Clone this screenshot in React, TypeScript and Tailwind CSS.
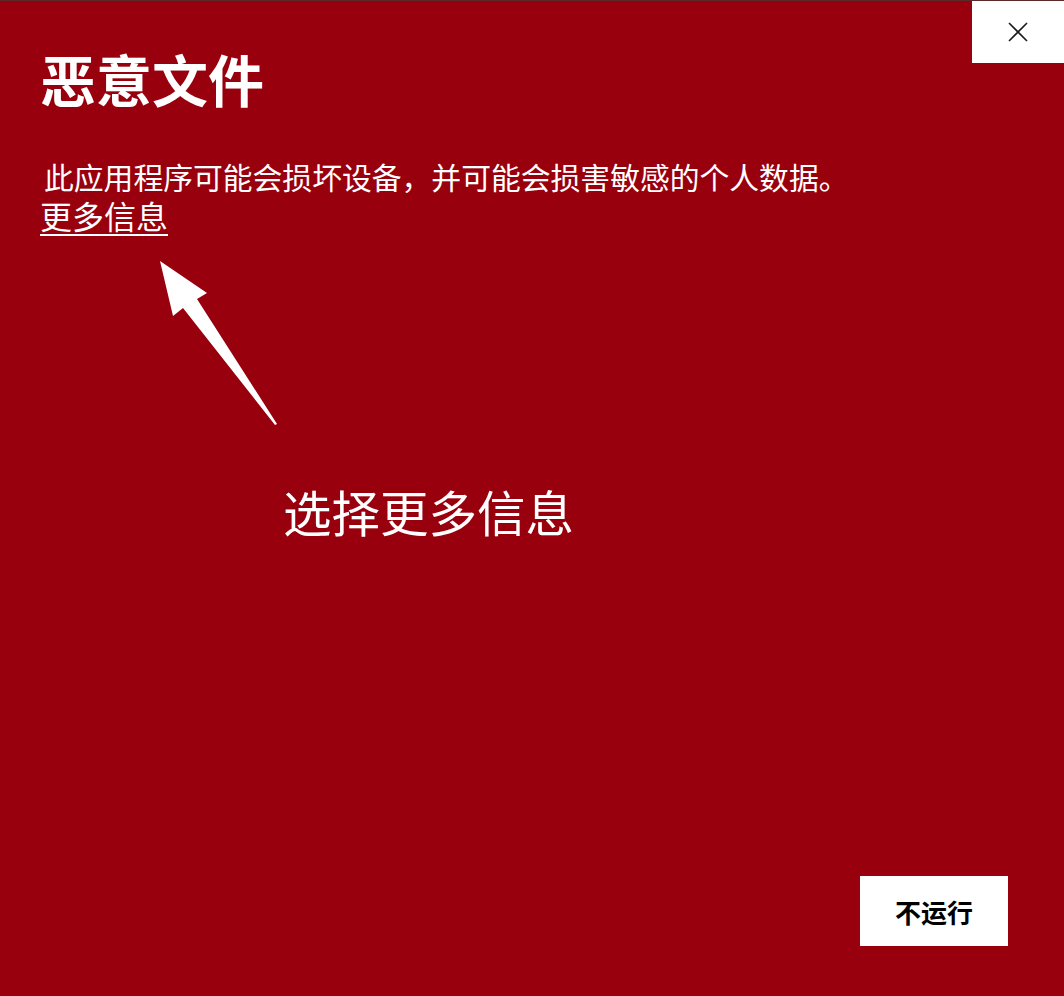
import React from "react";

export default function App() {
  const font = { fontFamily: '"Noto Sans CJK SC", "Noto Sans", sans-serif' };
  return (
    <div
      className="relative w-[1064px] h-[996px] bg-[#99000d] border-t border-[#5c2a2a] flex flex-col overflow-hidden text-white"
      style={font}
    >
      <div className="flex justify-between items-start">
        <h1 className="ml-[40px] mt-[43px] text-[56px] leading-[68px] font-bold">恶意文件</h1>
        <button className="w-[92px] h-[62px] bg-white flex items-center justify-center">
          <svg width="20" height="20" viewBox="0 0 20 20" fill="none">
            <path d="M1 1 L19 19 M19 1 L1 19" stroke="#1a1a1a" strokeWidth="1.6" />
          </svg>
        </button>
      </div>
      <p className="ml-[44px] mt-[45px] text-[29.8px] leading-[38px]">
        此应用程序可能会损坏设备，并可能会损害敏感的个人数据。
      </p>
      <a className="ml-[40px] w-fit text-[32px] leading-[40px] underline underline-offset-[5px] decoration-[2px]">
        更多信息
      </a>
      <div className="ml-[283px] mt-[246px] text-[48.5px] leading-[60px]">选择更多信息</div>
      <div className="mt-auto flex justify-end pr-[56px] pb-[50px]">
        <button className="w-[148px] h-[70px] bg-white text-black text-[26px] font-bold">不运行</button>
      </div>
      <svg className="absolute left-0 top-0 pointer-events-none" width="1064" height="996">
        <polygon points="160,260 207,292 197,298 277,423 275,424 183,307 173,315" fill="#ffffff" />
      </svg>
    </div>
  );
}
